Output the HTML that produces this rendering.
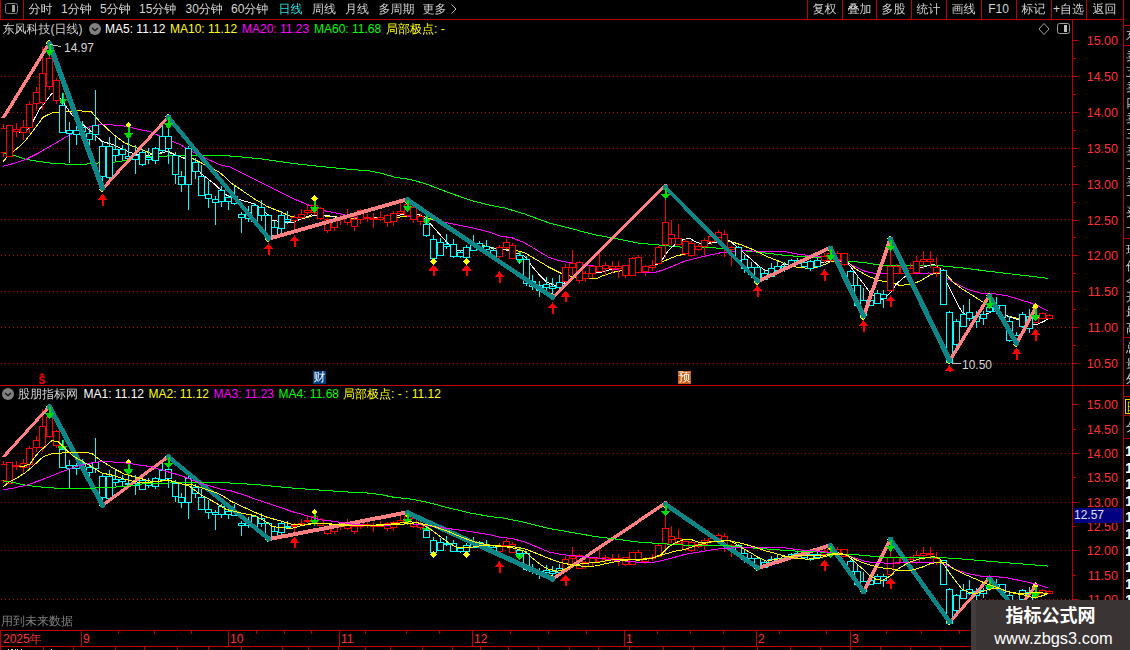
<!DOCTYPE html><html><head><meta charset="utf-8"><title>chart</title><style>
html,body{margin:0;padding:0;background:#000}
body{width:1130px;height:650px;position:relative;overflow:hidden;font-family:"Liberation Sans","WenQuanYi Zen Hei","Noto Sans CJK SC",sans-serif;font-size:12px;line-height:14px;color:#d4d4d4}
.t{position:absolute;white-space:nowrap}
.ax{position:absolute;left:1078px;width:40px;text-align:right;color:#ff3030;font-size:12.5px;line-height:12px;height:12px}
.w{color:#fff}.y{color:#ffff00}.m{color:#ff00ff}.g{color:#00ff00}.r{color:#ff3030}.c{color:#20e8e8}
.btn{position:absolute;top:2px;width:35px;text-align:center}
</style></head><body>
<svg width="1130" height="650" viewBox="0 0 1130 650" style="position:absolute;left:0;top:0" shape-rendering="crispEdges">
<defs><clipPath id="cm"><rect x="1" y="20" width="1071" height="352"/></clipPath><clipPath id="cs"><rect x="1" y="401" width="1071" height="229"/></clipPath></defs>
<path d="M1 76.5H1072M1 112.5H1072M1 148.5H1072M1 184.5H1072M1 219.5H1072M1 255.5H1072M1 291.5H1072M1 327.5H1072M1 363.5H1072M1 453.5H1072M1 502.5H1072M1 550.5H1072M1 599.5H1072" stroke="#c00000" stroke-dasharray="1 3" fill="none"/>
<g clip-path="url(#cm)">
<polyline points="3.2,152.8 13,155 25.9,159.3 38.8,161.5 51.7,163.2 64.7,164 80,164.7 98,163 115,162 130,160 146,156.7 170,155.9 201.6,155.8 230,156 245,157.3 262,159 291.6,163.3 320,166.4 352,169.6 369.3,170.8 381.6,173.3 393.9,177 410,179.5 424.8,183.4 447,192 471.6,200.6 491.3,205.6 505,208 524.6,214 549.3,223 573.9,229.3 595,234.8 614.6,238.3 639.3,243.2 664,245.5 685,247.5 704.6,247.6 729.3,248.5 741,250.5 755.8,252 774.2,254 786.5,255.5 798.8,256.5 819.3,257.5 844,261.4 862.7,262.2 876.5,264.7 887.6,265.6 904.3,265.6 929,265.6 940,265.7 962.3,267.9 984.6,270.8 1007,273.5 1029.2,276 1048.2,278.4" stroke="#00ff00" stroke-width="1" fill="none"/>
<polyline points="3.2,166.2 13,163.6 25.9,159.3 38.8,152.8 51.7,145.3 64.7,137.8 70,135 83,128.5 102,124 124,126 140,129.6 150,131.7 164.6,138.2 179.4,144.3 201.6,156.7 221.3,165.3 230,167 244.8,174.3 262,183 279.3,191.6 294,199 304,203 320,210 334.8,212.7 357,217.6 381.6,218.8 410,216 422.3,217.9 447,222.8 471.6,227.7 491.3,232.7 500,236 512.3,237.9 524.6,242.8 537,250.2 549.3,257.6 561.6,261.3 573.9,263.3 586.2,265 600,266.7 614.6,269.6 639.3,272.8 654,272.8 664,269.6 676.2,264.7 685,261 704.6,256.2 721.9,252.5 741.6,250.8 766.2,251.3 784.8,251.6 799.6,254.5 819.3,256.5 844,261.4 847.5,262.9 855.8,267 862.7,270.5 869.6,272.5 876.5,273.5 887.6,274 904.3,273.7 929,273 941.2,273.7 945.6,276.8 953.4,282.4 966.8,289 980,293 995.8,294 1007,295.8 1018,299 1029.2,302.5 1038,305.8 1048.2,311" stroke="#ff00ff" stroke-width="1" fill="none"/>
<polyline points="3.2,161.5 8.6,155 17.2,148.5 25.9,140 34.5,129 43,117.3 51.7,113 64.7,111.5 80,110.8 91.5,112 100,122 113,134 124,142.5 134.6,147 150,153 159,154 168,151.2 174,154 183,157.9 192,158.3 200.8,162.7 218.5,171.6 227,178.7 230,182.2 239.9,189 254.6,199 267,206.4 279.3,211.3 291.6,216.7 304,218.2 316,215 330,216.5 357,218.5 381.6,218 400,217 417,214.5 427,217.5 434.6,220.3 447,226.5 460,235 475,243 493.7,248.7 500,249.5 514.8,250.2 524.6,252.7 537,260 549.3,267.4 561.6,273.6 573.9,277.3 586.2,279 598,278 602.3,275.8 614.6,272 627,269.6 639.3,268.4 651.6,267 664,261 676.2,256 685,254 694.8,248.8 709.6,242.7 729.3,241 741.6,245 754,250 766.2,256.2 780,261.6 782.3,262.7 794.6,266.8 807,268.3 819.3,266.8 831.6,261.4 844,261.4 847.5,262.2 855.8,269 862.7,273.2 869.6,276.7 876.5,279.5 883.5,281.3 890.4,282.2 899.3,285.3 911.7,284.5 921.5,280.3 931.4,274.2 941.2,273 945.6,273.5 953.4,282.4 962.3,289 971.2,294.6 980,300.2 986.8,304.7 995.8,309 1007,315.8 1016,318 1029.2,318 1038,317 1048,319" stroke="#ffff00" stroke-width="1" fill="none"/>
<polyline points="19.4,132.4 23.7,131.3 30,128 34.5,118.4 39.9,108.7 45.3,102.2 51.7,93.6 58,95 65,105 72,115 78.6,121 91.5,131.7 102,141.4 113,144.6 124,150 134.6,154 145,156 159.7,153 167,151.7 177,155.4 189,160.3 201.6,174 214,183.7 226,194.8 240,199.8 254.6,204 264.5,211.3 272,220 279.3,221.6 291.6,223 301.4,218.7 311.3,215 330,216 345,219 360,219 380,217.5 395,216 410,213 420,215 431,224.5 447,242.5 456.8,251 471.6,250.6 484,247.4 500,248.5 512.3,251.4 524.6,256.4 532,266.2 539.4,274.8 546.8,282.2 556.7,286 564,283.4 571.4,278.5 581.3,274.8 600,272.4 614.6,268.4 639.3,269.6 651.6,267 661.4,261 668.8,250 676.2,243.7 683.6,239.3 690,238.5 697,242.7 704.6,244 729.3,240.2 739,248.8 749,257.4 758.8,266 766.2,271 780,267.3 782.3,265 799.6,262.7 819.3,263.4 829,261.4 839,259 847.5,262.9 853,269.8 858.5,277.4 864,284.3 869.6,292 876,298 882,299.5 886.2,296.8 891.8,291.2 896,284.3 901.5,279.5 909.2,273 919,268 933.8,264.3 940,268 945.6,280 951,291.3 957.8,304.7 962.3,312.5 969,317 975.7,319 984.6,314.7 993.5,311 1000,311.4 1007,315.8 1016,319 1022.5,320.3 1029.2,323.6 1036,324.8 1042.6,322 1048.2,319" stroke="#ffffff" stroke-width="1" fill="none"/>
<path d="M61.5 93h2v6h4l-5 6l-5-6h4z" fill="#00dc00"/>
<path d="M425.5 213h2v6h4l-5 6l-5-6h4z" fill="#00dc00"/>
<path d="M518.5 252h2v6h4l-5 6l-5-6h4z" fill="#00dc00"/>
<path d="M3.5 124V128M3.5 152V157M0.5 128.5H6.5V152.5H0.5ZM6.5 125.5H12.5V156.5H6.5ZM16.5 123V129M16.5 131V137M13.5 129.5H19.5V131.5H13.5ZM23.5 120V127M23.5 132V140M20.5 127.5H26.5V132.5H20.5ZM29.5 101V104M29.5 127V133M26.5 104.5H32.5V127.5H26.5ZM36.5 87V92M36.5 103V111M33.5 92.5H39.5V103.5H33.5ZM42.5 47V73M42.5 102V110M39.5 73.5H45.5V102.5H39.5ZM49.5 43V58M49.5 86V90M46.5 58.5H52.5V86.5H46.5ZM56.5 78V80M56.5 100V104M53.5 80.5H59.5V100.5H53.5ZM294.5 215V217M294.5 220V230M291.5 217.5H297.5V220.5H291.5ZM301.5 209V214M301.5 217V220M298.5 214.5H304.5V217.5H298.5ZM307.5 204V210M307.5 212V215M304.5 210.5H310.5V212.5H304.5ZM314.5 201V205M314.5 212V215M311.5 205.5H317.5V212.5H311.5ZM320.5 207V208M320.5 218V220M317.5 208.5H323.5V218.5H317.5ZM327.5 218V219M327.5 230V233M324.5 219.5H330.5V230.5H324.5ZM334.5 218V220M334.5 227V231M331.5 220.5H337.5V227.5H331.5ZM340.5 215V218M340.5 219V225M337.5 218.5H343.5V219.5H337.5ZM347.5 209V216M347.5 222V225M344.5 216.5H350.5V222.5H344.5ZM354.5 216V219M354.5 226V231M351.5 219.5H357.5V226.5H351.5ZM360.5 209V210M360.5 219V224M357.5 210.5H363.5V219.5H357.5ZM367.5 214V217M367.5 218V222M364.5 217.5H370.5V218.5H364.5ZM373.5 213V218M373.5 219V228M370.5 218.5H376.5V219.5H370.5ZM380.5 211V217M380.5 219V221M377.5 217.5H383.5V219.5H377.5ZM387.5 214V215M387.5 222V227M384.5 215.5H390.5V222.5H384.5ZM393.5 211V213M393.5 221V226M390.5 213.5H396.5V221.5H390.5ZM400.5 202V211M400.5 213V214M397.5 211.5H403.5V213.5H397.5ZM407.5 199V204M407.5 215V217M404.5 204.5H410.5V215.5H404.5ZM413.5 204V207M413.5 219V223M410.5 207.5H416.5V219.5H410.5ZM420.5 213V216M420.5 221V225M417.5 216.5H423.5V221.5H417.5ZM499.5 245V247M499.5 256V258M496.5 247.5H502.5V256.5H496.5ZM506.5 239V242M506.5 247V249M503.5 242.5H509.5V247.5H503.5ZM512.5 243V245M512.5 258V259M509.5 245.5H515.5V258.5H509.5ZM565.5 264V267M565.5 281V283M562.5 267.5H568.5V281.5H562.5ZM572.5 250V263M572.5 267V275M569.5 263.5H575.5V267.5H569.5ZM579.5 261V262M579.5 280V283M576.5 262.5H582.5V280.5H576.5ZM585.5 271V273M585.5 278V282M582.5 273.5H588.5V278.5H582.5ZM592.5 273V278M589.5 266.5H595.5V273.5H589.5ZM599.5 252V266M599.5 271V272M596.5 266.5H602.5V271.5H596.5ZM605.5 262V265M605.5 268V276M602.5 265.5H608.5V268.5H602.5ZM612.5 261V266M612.5 268V273M609.5 266.5H615.5V268.5H609.5ZM618.5 261V266M618.5 268V278M615.5 266.5H621.5V268.5H615.5ZM625.5 275V278M622.5 265.5H628.5V275.5H622.5ZM632.5 257V258M632.5 275V276M629.5 258.5H635.5V275.5H629.5ZM638.5 255V257M638.5 272V273M635.5 257.5H641.5V272.5H635.5ZM645.5 265V266M645.5 271V276M642.5 266.5H648.5V271.5H642.5ZM652.5 260V265M652.5 267V271M649.5 265.5H655.5V267.5H649.5ZM658.5 246V247M655.5 247.5H661.5V263.5H655.5ZM665.5 185V222M665.5 244V258M662.5 222.5H668.5V244.5H662.5ZM671.5 220V234M671.5 238V245M668.5 234.5H674.5V238.5H668.5ZM678.5 224V238M678.5 244V245M675.5 238.5H681.5V244.5H675.5ZM685.5 239V241M685.5 253V255M682.5 241.5H688.5V253.5H682.5ZM691.5 241V243M691.5 255V257M688.5 243.5H694.5V255.5H688.5ZM698.5 244V246M698.5 249V251M695.5 246.5H701.5V249.5H695.5ZM704.5 238V240M704.5 246V255M701.5 240.5H707.5V246.5H701.5ZM711.5 234V236M711.5 241V245M708.5 236.5H714.5V241.5H708.5ZM718.5 230V232M718.5 237V239M715.5 232.5H721.5V237.5H715.5ZM724.5 230V234M724.5 246V257M721.5 234.5H727.5V246.5H721.5ZM731.5 246V247M731.5 249V266M728.5 247.5H734.5V249.5H728.5ZM824.5 253V256M824.5 260V263M821.5 256.5H827.5V260.5H821.5ZM830.5 246V253M830.5 260V262M827.5 253.5H833.5V260.5H827.5ZM837.5 251V253M837.5 259V261M834.5 253.5H840.5V259.5H834.5ZM844.5 264V266M841.5 253.5H847.5V264.5H841.5ZM890.5 236V266M887.5 266.5H893.5V290.5H887.5ZM896.5 264V266M896.5 273V274M893.5 266.5H899.5V273.5H893.5ZM903.5 264V266M903.5 273V274M900.5 266.5H906.5V273.5H900.5ZM910.5 263V268M910.5 273V274M907.5 268.5H913.5V273.5H907.5ZM916.5 256V261M916.5 272V275M913.5 261.5H919.5V272.5H913.5ZM923.5 251V259M923.5 261V269M920.5 259.5H926.5V261.5H920.5ZM930.5 251V259M930.5 261V268M927.5 259.5H933.5V261.5H927.5ZM936.5 257V267M936.5 272V277M933.5 267.5H939.5V272.5H933.5ZM1035.5 306V318M1035.5 322V323M1032.5 318.5H1038.5V322.5H1032.5ZM1042.5 312V313M1042.5 318V319M1039.5 313.5H1045.5V318.5H1039.5ZM1049.5 314V315M1049.5 318V319M1046.5 315.5H1052.5V318.5H1046.5Z" stroke="#ff0000" fill="#000"/>
<path d="M62.5 93V105M59.5 105.5H65.5V132.5H59.5ZM69.5 122V130M69.5 133V163M66.5 130.5H72.5V133.5H66.5ZM76.5 126V130M76.5 134V145M73.5 130.5H79.5V134.5H73.5ZM82.5 121V127M82.5 131V137M79.5 127.5H85.5V131.5H79.5ZM89.5 128V133M89.5 139V147M86.5 133.5H92.5V139.5H86.5ZM95.5 90V125M95.5 134V141M92.5 125.5H98.5V134.5H92.5ZM102.5 142V146M102.5 176V190M99.5 146.5H105.5V176.5H99.5ZM109.5 137V146M109.5 177V180M106.5 146.5H112.5V177.5H106.5ZM115.5 137V149M115.5 155V161M112.5 149.5H118.5V155.5H112.5ZM122.5 145V149M122.5 154V160M119.5 149.5H125.5V154.5H119.5ZM128.5 139V156M128.5 158V160M125.5 156.5H131.5V158.5H125.5ZM135.5 145V155M135.5 159V174M132.5 155.5H138.5V159.5H132.5ZM142.5 149V152M142.5 164V166M139.5 152.5H145.5V164.5H139.5ZM148.5 148V157M148.5 159V164M145.5 157.5H151.5V159.5H145.5ZM155.5 147V148M155.5 160V164M152.5 148.5H158.5V160.5H152.5ZM162.5 125V136M162.5 150V153M159.5 136.5H165.5V150.5H159.5ZM168.5 128V136M168.5 148V164M165.5 136.5H171.5V148.5H165.5ZM175.5 152V155M175.5 174V184M172.5 155.5H178.5V174.5H172.5ZM181.5 171V176M181.5 184V192M178.5 176.5H184.5V184.5H178.5ZM188.5 146V148M188.5 184V210M185.5 148.5H191.5V184.5H185.5ZM195.5 158V162M195.5 171V179M192.5 162.5H198.5V171.5H192.5ZM201.5 165V176M198.5 176.5H204.5V195.5H198.5ZM208.5 181V194M208.5 198V208M205.5 194.5H211.5V198.5H205.5ZM215.5 196V199M215.5 202V225M212.5 199.5H218.5V202.5H212.5ZM221.5 186V190M221.5 201V207M218.5 190.5H224.5V201.5H218.5ZM228.5 195V197M228.5 201V210M225.5 197.5H231.5V201.5H225.5ZM234.5 186V196M234.5 203V205M231.5 196.5H237.5V203.5H231.5ZM241.5 212V214M241.5 217V233M238.5 214.5H244.5V217.5H238.5ZM248.5 206V212M248.5 218V222M245.5 212.5H251.5V218.5H245.5ZM254.5 203V205M254.5 221V224M251.5 205.5H257.5V221.5H251.5ZM261.5 200V207M261.5 215V221M258.5 207.5H264.5V215.5H258.5ZM268.5 214V215M268.5 238V242M265.5 215.5H271.5V238.5H265.5ZM274.5 221V227M274.5 235V236M271.5 227.5H277.5V235.5H271.5ZM281.5 211V215M281.5 228V233M278.5 215.5H284.5V228.5H278.5ZM287.5 211V219M287.5 221V224M284.5 219.5H290.5V221.5H284.5ZM426.5 217V224M426.5 235V237M423.5 224.5H429.5V235.5H423.5ZM433.5 235V239M430.5 239.5H436.5V258.5H430.5ZM440.5 238V242M440.5 255V256M437.5 242.5H443.5V255.5H437.5ZM446.5 234V244M446.5 246V249M443.5 244.5H449.5V246.5H443.5ZM453.5 239V244M453.5 256V258M450.5 244.5H456.5V256.5H450.5ZM460.5 250V252M460.5 256V258M457.5 252.5H463.5V256.5H457.5ZM466.5 245V247M466.5 257V258M463.5 247.5H469.5V257.5H463.5ZM473.5 235V243M473.5 250V251M470.5 243.5H476.5V250.5H470.5ZM479.5 241V243M479.5 247V250M476.5 243.5H482.5V247.5H476.5ZM486.5 240V246M486.5 249V251M483.5 246.5H489.5V249.5H483.5ZM493.5 247V250M493.5 257V258M490.5 250.5H496.5V257.5H490.5ZM519.5 253V255M519.5 259V264M516.5 255.5H522.5V259.5H516.5ZM526.5 256V259M526.5 283V286M523.5 259.5H529.5V283.5H523.5ZM532.5 275V281M532.5 286V290M529.5 281.5H535.5V286.5H529.5ZM539.5 281V285M539.5 290V297M536.5 285.5H542.5V290.5H536.5ZM546.5 277V284M546.5 287V291M543.5 284.5H549.5V287.5H543.5ZM552.5 278V286M552.5 288V298M549.5 286.5H555.5V288.5H549.5ZM559.5 275V282M559.5 287V290M556.5 282.5H562.5V287.5H556.5ZM738.5 246V247M738.5 260V261M735.5 247.5H741.5V260.5H735.5ZM744.5 255V259M744.5 268V273M741.5 259.5H747.5V268.5H741.5ZM751.5 262V267M751.5 274V278M748.5 267.5H754.5V274.5H748.5ZM757.5 265V267M757.5 281V283M754.5 267.5H760.5V281.5H754.5ZM764.5 270V273M764.5 279V280M761.5 273.5H767.5V279.5H761.5ZM771.5 263V268M768.5 268.5H774.5V276.5H768.5ZM777.5 261V266M777.5 270V272M774.5 266.5H780.5V270.5H774.5ZM784.5 262V266M784.5 268V272M781.5 266.5H787.5V268.5H781.5ZM791.5 259V260M791.5 265V266M788.5 260.5H794.5V265.5H788.5ZM797.5 258V260M797.5 263V264M794.5 260.5H800.5V263.5H794.5ZM804.5 259V262M804.5 266V267M801.5 262.5H807.5V266.5H801.5ZM810.5 260V261M810.5 268V271M807.5 261.5H813.5V268.5H807.5ZM817.5 258V260M817.5 266V268M814.5 260.5H820.5V266.5H814.5ZM850.5 270V271M850.5 285V286M847.5 271.5H853.5V285.5H847.5ZM857.5 276V285M857.5 305V306M854.5 285.5H860.5V305.5H854.5ZM863.5 288V300M863.5 315V318M860.5 300.5H866.5V315.5H860.5ZM870.5 297V300M870.5 305V306M867.5 300.5H873.5V305.5H867.5ZM877.5 290V293M877.5 303V304M874.5 293.5H880.5V303.5H874.5ZM883.5 290V294M883.5 298V308M880.5 294.5H886.5V298.5H880.5ZM943.5 269V270M943.5 304V305M940.5 270.5H946.5V304.5H940.5ZM949.5 311V312M949.5 362V363M946.5 312.5H952.5V362.5H946.5ZM956.5 319V321M956.5 344V353M953.5 321.5H959.5V344.5H953.5ZM963.5 305V314M963.5 326V327M960.5 314.5H966.5V326.5H960.5ZM969.5 299V312M969.5 318V321M966.5 312.5H972.5V318.5H966.5ZM976.5 311V316M976.5 321V328M973.5 316.5H979.5V321.5H973.5ZM983.5 311V314M983.5 318V325M980.5 314.5H986.5V318.5H980.5ZM989.5 294V307M989.5 311V313M986.5 307.5H992.5V311.5H986.5ZM996.5 297V305M996.5 311V314M993.5 305.5H999.5V311.5H993.5ZM1002.5 317V318M999.5 305.5H1005.5V317.5H999.5ZM1009.5 316V321M1009.5 340V342M1006.5 321.5H1012.5V340.5H1006.5ZM1016.5 332V335M1016.5 340V346M1013.5 335.5H1019.5V340.5H1013.5ZM1022.5 312V314M1022.5 326V328M1019.5 314.5H1025.5V326.5H1019.5ZM1029.5 309V316M1029.5 328V333M1026.5 316.5H1032.5V328.5H1026.5Z" stroke="#00ffff" fill="#000"/>
<path d="M49 39.8l3.2 3.2l-3.2 3.2l-3.2-3.2z" fill="#ffff00"/>
<path d="M102 186.3l3.2 3.2l-3.2 3.2l-3.2-3.2z" fill="#ffff00"/>
<path d="M168 113.6l3.2 3.2l-3.2 3.2l-3.2-3.2z" fill="#ffff00"/>
<path d="M268 236.1l3.2 3.2l-3.2 3.2l-3.2-3.2z" fill="#ffff00"/>
<path d="M407 197.9l3.2 3.2l-3.2 3.2l-3.2-3.2z" fill="#ffff00"/>
<path d="M552 292.5l3.2 3.2l-3.2 3.2l-3.2-3.2z" fill="#ffff00"/>
<path d="M665 184.3l3.2 3.2l-3.2 3.2l-3.2-3.2z" fill="#ffff00"/>
<path d="M757 278.8l3.2 3.2l-3.2 3.2l-3.2-3.2z" fill="#ffff00"/>
<path d="M830 246.3l3.2 3.2l-3.2 3.2l-3.2-3.2z" fill="#ffff00"/>
<path d="M863 313.8l3.2 3.2l-3.2 3.2l-3.2-3.2z" fill="#ffff00"/>
<path d="M890 235.3l3.2 3.2l-3.2 3.2l-3.2-3.2z" fill="#ffff00"/>
<path d="M949 358.3l3.2 3.2l-3.2 3.2l-3.2-3.2z" fill="#ffff00"/>
<path d="M989 292.3l3.2 3.2l-3.2 3.2l-3.2-3.2z" fill="#ffff00"/>
<path d="M1016 341.3l3.2 3.2l-3.2 3.2l-3.2-3.2z" fill="#ffff00"/>
<path d="M1035 304.6l3.2 3.2l-3.2 3.2l-3.2-3.2z" fill="#ffff00"/>
<polygon points="1.5,117.5 47.5,43 51.5,43 5.5,117.5" fill="#ff8080"/>
<circle cx="49.5" cy="43" r="2" fill="#ff8080"/>
<polygon points="100.5,189 166.5,116.8 170.5,116.8 104.5,189" fill="#ff8080"/>
<circle cx="102.5" cy="189" r="2" fill="#ff8080"/>
<circle cx="168.5" cy="116.8" r="2" fill="#ff8080"/>
<polygon points="268.5,236.8 407.5,197.1 407.5,201.1 268.5,240.8" fill="#ff8080"/>
<circle cx="268.5" cy="238.8" r="2" fill="#ff8080"/>
<circle cx="407.5" cy="199.1" r="2" fill="#ff8080"/>
<polygon points="552.5,295.5 665.5,183.5 665.5,187.5 552.5,299.5" fill="#ff8080"/>
<circle cx="552.5" cy="297.5" r="2" fill="#ff8080"/>
<circle cx="665.5" cy="185.5" r="2" fill="#ff8080"/>
<polygon points="757.5,279.5 830.5,245.5 830.5,249.5 757.5,283.5" fill="#ff8080"/>
<circle cx="757.5" cy="281.5" r="2" fill="#ff8080"/>
<circle cx="830.5" cy="247.5" r="2" fill="#ff8080"/>
<polygon points="861.5,316.5 888.5,238.5 892.5,238.5 865.5,316.5" fill="#ff8080"/>
<circle cx="863.5" cy="316.5" r="2" fill="#ff8080"/>
<circle cx="890.5" cy="238.5" r="2" fill="#ff8080"/>
<polygon points="947.5,361 987.5,295.5 991.5,295.5 951.5,361" fill="#ff8080"/>
<circle cx="949.5" cy="361" r="2" fill="#ff8080"/>
<circle cx="989.5" cy="295.5" r="2" fill="#ff8080"/>
<polygon points="1014.5,344 1033.5,307.8 1037.5,307.8 1018.5,344" fill="#ff8080"/>
<circle cx="1016.5" cy="344" r="2" fill="#ff8080"/>
<circle cx="1035.5" cy="307.8" r="2" fill="#ff8080"/>
<polygon points="46.7,43.8 99.7,188.2 105.3,188.2 52.3,43.8" fill="#0c8686"/>
<circle cx="49.5" cy="43.8" r="2.8" fill="#0c8686"/>
<circle cx="102.5" cy="188.2" r="2.8" fill="#0c8686"/>
<polygon points="165.7,117.6 265.7,238 271.3,238 171.3,117.6" fill="#0c8686"/>
<circle cx="168.5" cy="117.6" r="2.8" fill="#0c8686"/>
<circle cx="268.5" cy="238" r="2.8" fill="#0c8686"/>
<polygon points="407.5,197.1 552.5,294.4 552.5,300 407.5,202.7" fill="#0c8686"/>
<circle cx="407.5" cy="199.9" r="2.8" fill="#0c8686"/>
<circle cx="552.5" cy="297.2" r="2.8" fill="#0c8686"/>
<polygon points="662.7,187.4 754.7,280.7 760.3,280.7 668.3,187.4" fill="#0c8686"/>
<circle cx="665.5" cy="187.4" r="2.8" fill="#0c8686"/>
<circle cx="757.5" cy="280.7" r="2.8" fill="#0c8686"/>
<polygon points="827.7,248.3 860.7,315.7 866.3,315.7 833.3,248.3" fill="#0c8686"/>
<circle cx="830.5" cy="248.3" r="2.8" fill="#0c8686"/>
<circle cx="863.5" cy="315.7" r="2.8" fill="#0c8686"/>
<polygon points="887.7,239.3 946.7,360.2 952.3,360.2 893.3,239.3" fill="#0c8686"/>
<circle cx="890.5" cy="239.3" r="2.8" fill="#0c8686"/>
<circle cx="949.5" cy="360.2" r="2.8" fill="#0c8686"/>
<polygon points="986.7,296.3 1013.7,343.2 1019.3,343.2 992.3,296.3" fill="#0c8686"/>
<circle cx="989.5" cy="296.3" r="2.8" fill="#0c8686"/>
<circle cx="1016.5" cy="343.2" r="2.8" fill="#0c8686"/>
<path d="M48.5 44h2v6h4l-5 6l-5-6h4z" fill="#00dc00"/>
<path d="M128.5 121.6l3.2 3.2l-3.2 3.2l-3.2-3.2z" fill="#ffff00"/>
<path d="M127.5 127h2v6h4l-5 6l-5-6h4z" fill="#00dc00"/>
<path d="M167.5 117h2v6h4l-5 6l-5-6h4z" fill="#00dc00"/>
<path d="M314.5 195.3l3.2 3.2l-3.2 3.2l-3.2-3.2z" fill="#ffff00"/>
<path d="M313.5 201h2v6h4l-5 6l-5-6h4z" fill="#00dc00"/>
<path d="M406.5 200h2v6h4l-5 6l-5-6h4z" fill="#00dc00"/>
<path d="M664.5 187.6h2v6h4l-5 6l-5-6h4z" fill="#00dc00"/>
<path d="M829.5 249h2v6h4l-5 6l-5-6h4z" fill="#00dc00"/>
<path d="M889.5 239.7h2v6h4l-5 6l-5-6h4z" fill="#00dc00"/>
<path d="M988.5 297h2v6h4l-5 6l-5-6h4z" fill="#00dc00"/>
<path d="M1035.5 303l3.2 3.2l-3.2 3.2l-3.2-3.2z" fill="#ffff00"/>
<path d="M1034.5 309h2v6h4l-5 6l-5-6h4z" fill="#00dc00"/>
<path d="M102.5 194l5 6h-4v5.5h-2v-5.5h-4z" fill="#ff0000"/>
<path d="M268.5 243.4l5 6h-4v5.5h-2v-5.5h-4z" fill="#ff0000"/>
<path d="M294.5 235.4l5 6h-4v5.5h-2v-5.5h-4z" fill="#ff0000"/>
<path d="M433.5 258.3l3.2 3.2l-3.2 3.2l-3.2-3.2z" fill="#ffff00"/>
<path d="M433.5 264.7l5 6h-4v5.5h-2v-5.5h-4z" fill="#ff0000"/>
<path d="M466.5 258.3l3.2 3.2l-3.2 3.2l-3.2-3.2z" fill="#ffff00"/>
<path d="M466.5 264.7l5 6h-4v5.5h-2v-5.5h-4z" fill="#ff0000"/>
<path d="M499.5 271.3l5 6h-4v5.5h-2v-5.5h-4z" fill="#ff0000"/>
<path d="M552.5 302.4l5 6h-4v5.5h-2v-5.5h-4z" fill="#ff0000"/>
<path d="M565.5 290.8l5 6h-4v5.5h-2v-5.5h-4z" fill="#ff0000"/>
<path d="M757.5 285.3l5 6h-4v5.5h-2v-5.5h-4z" fill="#ff0000"/>
<path d="M824.5 269.3l5 6h-4v5.5h-2v-5.5h-4z" fill="#ff0000"/>
<path d="M863.5 320.3l5 6h-4v5.5h-2v-5.5h-4z" fill="#ff0000"/>
<path d="M890.5 295.4l5 6h-4v5.5h-2v-5.5h-4z" fill="#ff0000"/>
<path d="M949.5 365.3l5 6h-4v5.5h-2v-5.5h-4z" fill="#ff0000"/>
<path d="M1016.5 348l5 6h-4v5.5h-2v-5.5h-4z" fill="#ff0000"/>
<path d="M1035.5 329l5 6h-4v5.5h-2v-5.5h-4z" fill="#ff0000"/>
</g>
<g clip-path="url(#cs)">
<path d="M61.5 440.3h2v6h4l-5 6l-5-6h4z" fill="#00dc00"/>
<path d="M425.5 521.7h2v6h4l-5 6l-5-6h4z" fill="#00dc00"/>
<path d="M518.5 548.2h2v6h4l-5 6l-5-6h4z" fill="#00dc00"/>
<path d="M3.5 461V464M3.5 480V483M0.5 464.5H6.5V480.5H0.5ZM6.5 462.5H12.5V483.5H6.5ZM16.5 461V465M16.5 466V470M13.5 465.5H19.5V466.5H13.5ZM23.5 459V463M23.5 467V473M20.5 463.5H26.5V467.5H20.5ZM29.5 446V448M29.5 464V468M26.5 448.5H32.5V464.5H26.5ZM36.5 436V440M36.5 447V452M33.5 440.5H39.5V447.5H33.5ZM42.5 409V426M42.5 447V452M39.5 426.5H45.5V447.5H39.5ZM49.5 406V417M49.5 436V438M46.5 417.5H52.5V436.5H46.5ZM56.5 430V431M56.5 445V448M53.5 431.5H59.5V445.5H53.5ZM294.5 523V525M294.5 526V533M291.5 525.5H297.5V526.5H291.5ZM301.5 519V523M301.5 524V526M298.5 523.5H304.5V524.5H298.5ZM307.5 516V520M307.5 521V523M304.5 520.5H310.5V521.5H304.5ZM314.5 514V516M314.5 521V523M311.5 516.5H317.5V521.5H311.5ZM320.5 518V519M320.5 525V526M317.5 519.5H323.5V525.5H317.5ZM327.5 525V526M327.5 533V535M324.5 526.5H330.5V533.5H324.5ZM334.5 525V526M334.5 531V534M331.5 526.5H337.5V531.5H331.5ZM340.5 523V525M340.5 526V530M337.5 525.5H343.5V526.5H337.5ZM347.5 519V524M347.5 528V530M344.5 524.5H350.5V528.5H344.5ZM354.5 524V526M354.5 531V534M351.5 526.5H357.5V531.5H351.5ZM360.5 519V520M360.5 526V529M357.5 520.5H363.5V526.5H357.5ZM367.5 522V524M367.5 525V528M364.5 524.5H370.5V525.5H364.5ZM373.5 522V525M373.5 526V532M370.5 525.5H376.5V526.5H370.5ZM380.5 521V524M380.5 526V527M377.5 524.5H383.5V526.5H377.5ZM387.5 522V523M387.5 528V531M384.5 523.5H390.5V528.5H384.5ZM393.5 521V522M393.5 527V531M390.5 522.5H396.5V527.5H390.5ZM400.5 514V520M397.5 520.5H403.5V522.5H397.5ZM407.5 512V516M407.5 523V524M404.5 516.5H410.5V523.5H404.5ZM413.5 516V518M413.5 526V528M410.5 518.5H416.5V526.5H410.5ZM420.5 522V524M420.5 527V530M417.5 524.5H423.5V527.5H417.5ZM499.5 543V545M499.5 551V553M496.5 545.5H502.5V551.5H496.5ZM506.5 539V541M506.5 545V546M503.5 541.5H509.5V545.5H503.5ZM512.5 542V544M512.5 552V553M509.5 544.5H515.5V552.5H509.5ZM565.5 556V559M565.5 568V569M562.5 559.5H568.5V568.5H562.5ZM572.5 547V556M572.5 558V564M569.5 556.5H575.5V558.5H569.5ZM579.5 554V555M579.5 568V569M576.5 555.5H582.5V568.5H576.5ZM585.5 561V562M585.5 566V569M582.5 562.5H588.5V566.5H582.5ZM592.5 562V566M589.5 558.5H595.5V562.5H589.5ZM599.5 548V558M599.5 561V562M596.5 558.5H602.5V561.5H596.5ZM605.5 555V557M605.5 559V564M602.5 557.5H608.5V559.5H602.5ZM612.5 554V558M612.5 559V563M609.5 558.5H615.5V559.5H609.5ZM618.5 554V558M618.5 559V566M615.5 558.5H621.5V559.5H615.5ZM625.5 564V566M622.5 557.5H628.5V564.5H622.5ZM629.5 552.5H635.5V564.5H629.5ZM638.5 550V552M635.5 552.5H641.5V562.5H635.5ZM645.5 557V558M645.5 561V564M642.5 558.5H648.5V561.5H642.5ZM652.5 554V557M652.5 558V561M649.5 557.5H655.5V558.5H649.5ZM658.5 544V545M655.5 545.5H661.5V556.5H655.5ZM665.5 502V528M665.5 543V553M662.5 528.5H668.5V543.5H662.5ZM671.5 526V536M671.5 539V543M668.5 536.5H674.5V539.5H668.5ZM678.5 529V538M675.5 538.5H681.5V543.5H675.5ZM685.5 539V541M685.5 549V550M682.5 541.5H688.5V549.5H682.5ZM691.5 541V542M691.5 550V552M688.5 542.5H694.5V550.5H688.5ZM698.5 543V544M698.5 546V548M695.5 544.5H701.5V546.5H695.5ZM704.5 538V540M704.5 544V550M701.5 540.5H707.5V544.5H701.5ZM711.5 536V538M711.5 541V543M708.5 538.5H714.5V541.5H708.5ZM718.5 533V535M718.5 538V539M715.5 535.5H721.5V538.5H715.5ZM724.5 533V536M724.5 544V552M721.5 536.5H727.5V544.5H721.5ZM731.5 544V545M731.5 546V557M728.5 545.5H734.5V546.5H728.5ZM824.5 549V551M824.5 554V556M821.5 551.5H827.5V554.5H821.5ZM830.5 544V549M830.5 554V555M827.5 549.5H833.5V554.5H827.5ZM837.5 547V549M837.5 553V554M834.5 549.5H840.5V553.5H834.5ZM844.5 556V557M841.5 549.5H847.5V556.5H841.5ZM890.5 538V557M887.5 557.5H893.5V574.5H887.5ZM896.5 556V557M893.5 557.5H899.5V563.5H893.5ZM903.5 556V558M903.5 562V563M900.5 558.5H906.5V562.5H900.5ZM910.5 556V559M910.5 562V563M907.5 559.5H913.5V562.5H907.5ZM916.5 551V555M916.5 562V564M913.5 555.5H919.5V562.5H913.5ZM923.5 547V553M923.5 555V560M920.5 553.5H926.5V555.5H920.5ZM930.5 547V553M930.5 554V559M927.5 553.5H933.5V554.5H927.5ZM936.5 552V558M936.5 562V565M933.5 558.5H939.5V562.5H933.5ZM1035.5 585V593M1032.5 593.5H1038.5V596.5H1032.5ZM1042.5 589V590M1042.5 593V594M1039.5 590.5H1045.5V593.5H1039.5ZM1049.5 590V591M1049.5 593V594M1046.5 591.5H1052.5V593.5H1046.5Z" stroke="#ff0000" fill="#000"/>
<path d="M62.5 440V449M59.5 449.5H65.5V467.5H59.5ZM69.5 460V465M69.5 468V488M66.5 465.5H72.5V468.5H66.5ZM76.5 463V465M76.5 468V475M73.5 465.5H79.5V468.5H73.5ZM82.5 459V463M82.5 466V470M79.5 463.5H85.5V466.5H79.5ZM89.5 464V467M89.5 472V477M86.5 467.5H92.5V472.5H86.5ZM95.5 438V462M95.5 468V473M92.5 462.5H98.5V468.5H92.5ZM102.5 474V476M102.5 497V506M99.5 476.5H105.5V497.5H99.5ZM109.5 470V476M109.5 498V499M106.5 476.5H112.5V498.5H106.5ZM115.5 470V479M115.5 482V486M112.5 479.5H118.5V482.5H112.5ZM122.5 475V479M122.5 481V486M119.5 479.5H125.5V481.5H119.5ZM128.5 471V483M128.5 484V486M125.5 483.5H131.5V484.5H125.5ZM135.5 475V483M135.5 485V495M132.5 483.5H138.5V485.5H132.5ZM142.5 478V480M142.5 489V490M139.5 480.5H145.5V489.5H139.5ZM148.5 478V483M148.5 485V488M145.5 483.5H151.5V485.5H145.5ZM155.5 477V478M155.5 486V489M152.5 478.5H158.5V486.5H152.5ZM162.5 462V470M162.5 479V481M159.5 470.5H165.5V479.5H159.5ZM168.5 464V469M168.5 478V488M165.5 469.5H171.5V478.5H165.5ZM175.5 480V483M175.5 496V502M172.5 483.5H178.5V496.5H172.5ZM181.5 493V497M181.5 502V508M178.5 497.5H184.5V502.5H178.5ZM188.5 476V478M188.5 502V519M185.5 478.5H191.5V502.5H185.5ZM195.5 484V487M195.5 493V498M192.5 487.5H198.5V493.5H192.5ZM201.5 489V497M198.5 497.5H204.5V509.5H198.5ZM208.5 500V509M208.5 512V519M205.5 509.5H211.5V512.5H205.5ZM215.5 510V512M215.5 514V530M212.5 512.5H218.5V514.5H212.5ZM221.5 504V506M221.5 514V518M218.5 506.5H224.5V514.5H218.5ZM228.5 509V511M228.5 514V519M225.5 511.5H231.5V514.5H225.5ZM234.5 504V511M234.5 515V516M231.5 511.5H237.5V515.5H231.5ZM241.5 521V523M241.5 525V536M238.5 523.5H244.5V525.5H238.5ZM248.5 517V521M248.5 525V528M245.5 521.5H251.5V525.5H245.5ZM254.5 515V516M254.5 527V529M251.5 516.5H257.5V527.5H251.5ZM261.5 513V518M261.5 523V527M258.5 518.5H264.5V523.5H258.5ZM268.5 522V523M268.5 539V541M265.5 523.5H271.5V539.5H265.5ZM274.5 527V531M274.5 536V537M271.5 531.5H277.5V536.5H271.5ZM281.5 521V523M281.5 532V536M278.5 523.5H284.5V532.5H278.5ZM287.5 521V526M287.5 527V529M284.5 526.5H290.5V527.5H284.5ZM426.5 524V530M426.5 537V538M423.5 530.5H429.5V537.5H423.5ZM433.5 537V540M433.5 552V553M430.5 540.5H436.5V552.5H430.5ZM440.5 538V542M440.5 550V551M437.5 542.5H443.5V550.5H437.5ZM446.5 536V543M446.5 544V546M443.5 543.5H449.5V544.5H443.5ZM453.5 540V543M453.5 551V552M450.5 543.5H456.5V551.5H450.5ZM460.5 547V548M460.5 551V553M457.5 548.5H463.5V551.5H457.5ZM466.5 543V545M466.5 551V553M463.5 545.5H469.5V551.5H463.5ZM473.5 537V542M470.5 542.5H476.5V547.5H470.5ZM479.5 541V542M479.5 545V547M476.5 542.5H482.5V545.5H476.5ZM486.5 540V544M486.5 546V547M483.5 544.5H489.5V546.5H483.5ZM493.5 545V547M493.5 551V552M490.5 547.5H496.5V551.5H490.5ZM519.5 549V550M519.5 553V556M516.5 550.5H522.5V553.5H516.5ZM526.5 551V553M526.5 569V571M523.5 553.5H529.5V569.5H523.5ZM532.5 564V568M532.5 571V574M529.5 568.5H535.5V571.5H529.5ZM539.5 568V571M539.5 574V579M536.5 571.5H542.5V574.5H536.5ZM546.5 565V570M546.5 572V575M543.5 570.5H549.5V572.5H543.5ZM552.5 566V571M552.5 573V579M549.5 571.5H555.5V573.5H549.5ZM559.5 564V568M559.5 572V574M556.5 568.5H562.5V572.5H556.5ZM738.5 544V545M735.5 545.5H741.5V554.5H735.5ZM744.5 550V553M744.5 559V563M741.5 553.5H747.5V559.5H741.5ZM751.5 555V558M751.5 563V566M748.5 558.5H754.5V563.5H748.5ZM757.5 557V558M757.5 568V569M754.5 558.5H760.5V568.5H754.5ZM764.5 560V562M761.5 562.5H767.5V567.5H761.5ZM771.5 556V559M771.5 564V565M768.5 559.5H774.5V564.5H768.5ZM777.5 554V558M777.5 560V561M774.5 558.5H780.5V560.5H774.5ZM784.5 555V558M784.5 559V562M781.5 558.5H787.5V559.5H781.5ZM791.5 553V554M788.5 554.5H794.5V557.5H788.5ZM797.5 552V553M794.5 553.5H800.5V556.5H794.5ZM804.5 553V555M804.5 557V558M801.5 555.5H807.5V557.5H801.5ZM810.5 559V561M807.5 554.5H813.5V559.5H807.5ZM817.5 552V554M817.5 557V559M814.5 554.5H820.5V557.5H814.5ZM850.5 560V561M847.5 561.5H853.5V571.5H847.5ZM857.5 564V571M857.5 584V585M854.5 571.5H860.5V584.5H854.5ZM863.5 572V581M863.5 591V593M860.5 581.5H866.5V591.5H860.5ZM870.5 579V580M870.5 584V585M867.5 580.5H873.5V584.5H867.5ZM877.5 574V576M874.5 576.5H880.5V583.5H874.5ZM883.5 574V576M883.5 580V587M880.5 576.5H886.5V580.5H880.5ZM940.5 560.5H946.5V584.5H940.5ZM949.5 588V589M949.5 623V624M946.5 589.5H952.5V623.5H946.5ZM956.5 594V595M956.5 610V616M953.5 595.5H959.5V610.5H953.5ZM963.5 584V590M963.5 598V599M960.5 590.5H966.5V598.5H960.5ZM969.5 580V589M969.5 593V595M966.5 589.5H972.5V593.5H966.5ZM976.5 588V591M976.5 595V600M973.5 591.5H979.5V595.5H973.5ZM983.5 588V590M983.5 593V598M980.5 590.5H986.5V593.5H980.5ZM989.5 576V586M989.5 588V590M986.5 586.5H992.5V588.5H986.5ZM996.5 579V584M996.5 588V590M993.5 584.5H999.5V588.5H993.5ZM1002.5 592V593M999.5 584.5H1005.5V592.5H999.5ZM1009.5 591V595M1009.5 608V609M1006.5 595.5H1012.5V608.5H1006.5ZM1016.5 602V605M1016.5 608V612M1013.5 605.5H1019.5V608.5H1013.5ZM1022.5 589V590M1022.5 599V600M1019.5 590.5H1025.5V599.5H1019.5ZM1029.5 587V592M1029.5 600V603M1026.5 592.5H1032.5V600.5H1026.5Z" stroke="#00ffff" fill="#000"/>
<path d="M49 403.8l3.2 3.2l-3.2 3.2l-3.2-3.2z" fill="#ffff00"/>
<path d="M102 502.1l3.2 3.2l-3.2 3.2l-3.2-3.2z" fill="#ffff00"/>
<path d="M168 453.9l3.2 3.2l-3.2 3.2l-3.2-3.2z" fill="#ffff00"/>
<path d="M268 535.9l3.2 3.2l-3.2 3.2l-3.2-3.2z" fill="#ffff00"/>
<path d="M407 511.1l3.2 3.2l-3.2 3.2l-3.2-3.2z" fill="#ffff00"/>
<path d="M552 574.2l3.2 3.2l-3.2 3.2l-3.2-3.2z" fill="#ffff00"/>
<path d="M665 501.8l3.2 3.2l-3.2 3.2l-3.2-3.2z" fill="#ffff00"/>
<path d="M757 564.9l3.2 3.2l-3.2 3.2l-3.2-3.2z" fill="#ffff00"/>
<path d="M830 543.9l3.2 3.2l-3.2 3.2l-3.2-3.2z" fill="#ffff00"/>
<path d="M863 588.6l3.2 3.2l-3.2 3.2l-3.2-3.2z" fill="#ffff00"/>
<path d="M890 536.5l3.2 3.2l-3.2 3.2l-3.2-3.2z" fill="#ffff00"/>
<path d="M949 618.8l3.2 3.2l-3.2 3.2l-3.2-3.2z" fill="#ffff00"/>
<path d="M989 575.1l3.2 3.2l-3.2 3.2l-3.2-3.2z" fill="#ffff00"/>
<path d="M1016 607.3l3.2 3.2l-3.2 3.2l-3.2-3.2z" fill="#ffff00"/>
<path d="M1035 583.5l3.2 3.2l-3.2 3.2l-3.2-3.2z" fill="#ffff00"/>
<polygon points="1.5,456.9 47.5,406.3 51.5,406.3 5.5,456.9" fill="#ff8080"/>
<circle cx="49.5" cy="406.3" r="2" fill="#ff8080"/>
<polygon points="102.5,503.4 168.5,454.4 168.5,458.4 102.5,507.4" fill="#ff8080"/>
<circle cx="102.5" cy="505.4" r="2" fill="#ff8080"/>
<circle cx="168.5" cy="456.4" r="2" fill="#ff8080"/>
<polygon points="268.5,537.2 407.5,510.3 407.5,514.3 268.5,541.2" fill="#ff8080"/>
<circle cx="268.5" cy="539.2" r="2" fill="#ff8080"/>
<circle cx="407.5" cy="512.3" r="2" fill="#ff8080"/>
<polygon points="552.5,577.1 665.5,501 665.5,505 552.5,581.1" fill="#ff8080"/>
<circle cx="552.5" cy="579.1" r="2" fill="#ff8080"/>
<circle cx="665.5" cy="503" r="2" fill="#ff8080"/>
<polygon points="757.5,566.2 830.5,543.1 830.5,547.1 757.5,570.2" fill="#ff8080"/>
<circle cx="757.5" cy="568.2" r="2" fill="#ff8080"/>
<circle cx="830.5" cy="545.1" r="2" fill="#ff8080"/>
<polygon points="861.5,592 888.5,539 892.5,539 865.5,592" fill="#ff8080"/>
<circle cx="863.5" cy="592" r="2" fill="#ff8080"/>
<circle cx="890.5" cy="539" r="2" fill="#ff8080"/>
<polygon points="947.5,622.2 987.5,577.7 991.5,577.7 951.5,622.2" fill="#ff8080"/>
<circle cx="949.5" cy="622.2" r="2" fill="#ff8080"/>
<circle cx="989.5" cy="577.7" r="2" fill="#ff8080"/>
<polygon points="1014.5,610.6 1033.5,586.1 1037.5,586.1 1018.5,610.6" fill="#ff8080"/>
<circle cx="1016.5" cy="610.6" r="2" fill="#ff8080"/>
<circle cx="1035.5" cy="586.1" r="2" fill="#ff8080"/>
<polygon points="46.7,406.9 99.7,504.9 105.3,504.9 52.3,406.9" fill="#0c8686"/>
<circle cx="49.5" cy="406.9" r="2.8" fill="#0c8686"/>
<circle cx="102.5" cy="504.9" r="2.8" fill="#0c8686"/>
<polygon points="168.5,454.2 268.5,535.9 268.5,541.5 168.5,459.8" fill="#0c8686"/>
<circle cx="168.5" cy="457" r="2.8" fill="#0c8686"/>
<circle cx="268.5" cy="538.7" r="2.8" fill="#0c8686"/>
<polygon points="407.5,510 552.5,576.1 552.5,581.7 407.5,515.6" fill="#0c8686"/>
<circle cx="407.5" cy="512.8" r="2.8" fill="#0c8686"/>
<circle cx="552.5" cy="578.9" r="2.8" fill="#0c8686"/>
<polygon points="665.5,501.5 757.5,564.9 757.5,570.5 665.5,507.1" fill="#0c8686"/>
<circle cx="665.5" cy="504.3" r="2.8" fill="#0c8686"/>
<circle cx="757.5" cy="567.7" r="2.8" fill="#0c8686"/>
<polygon points="827.7,545.7 860.7,591.4 866.3,591.4 833.3,545.7" fill="#0c8686"/>
<circle cx="830.5" cy="545.7" r="2.8" fill="#0c8686"/>
<circle cx="863.5" cy="591.4" r="2.8" fill="#0c8686"/>
<polygon points="887.7,539.6 946.7,621.6 952.3,621.6 893.3,539.6" fill="#0c8686"/>
<circle cx="890.5" cy="539.6" r="2.8" fill="#0c8686"/>
<circle cx="949.5" cy="621.6" r="2.8" fill="#0c8686"/>
<polygon points="986.7,578.2 1013.7,610.1 1019.3,610.1 992.3,578.2" fill="#0c8686"/>
<circle cx="989.5" cy="578.2" r="2.8" fill="#0c8686"/>
<circle cx="1016.5" cy="610.1" r="2.8" fill="#0c8686"/>
<path d="M48.5 407h2v6h4l-5 6l-5-6h4z" fill="#00dc00"/>
<path d="M128.5 458.6l3.2 3.2l-3.2 3.2l-3.2-3.2z" fill="#ffff00"/>
<path d="M127.5 463.3h2v6h4l-5 6l-5-6h4z" fill="#00dc00"/>
<path d="M167.5 456.6h2v6h4l-5 6l-5-6h4z" fill="#00dc00"/>
<path d="M314.5 508.7l3.2 3.2l-3.2 3.2l-3.2-3.2z" fill="#ffff00"/>
<path d="M313.5 513.6h2v6h4l-5 6l-5-6h4z" fill="#00dc00"/>
<path d="M406.5 512.9h2v6h4l-5 6l-5-6h4z" fill="#00dc00"/>
<path d="M664.5 504.5h2v6h4l-5 6l-5-6h4z" fill="#00dc00"/>
<path d="M829.5 546.1h2v6h4l-5 6l-5-6h4z" fill="#00dc00"/>
<path d="M889.5 539.8h2v6h4l-5 6l-5-6h4z" fill="#00dc00"/>
<path d="M988.5 578.7h2v6h4l-5 6l-5-6h4z" fill="#00dc00"/>
<path d="M1035.5 581.8l3.2 3.2l-3.2 3.2l-3.2-3.2z" fill="#ffff00"/>
<path d="M1034.5 586.9h2v6h4l-5 6l-5-6h4z" fill="#00dc00"/>
<path d="M294.5 536.9l5 6h-4v5.5h-2v-5.5h-4z" fill="#ff0000"/>
<path d="M433.5 551.4l3.2 3.2l-3.2 3.2l-3.2-3.2z" fill="#ffff00"/>
<path d="M466.5 551.4l3.2 3.2l-3.2 3.2l-3.2-3.2z" fill="#ffff00"/>
<path d="M499.5 561.3l5 6h-4v5.5h-2v-5.5h-4z" fill="#ff0000"/>
<path d="M565.5 574.5l5 6h-4v5.5h-2v-5.5h-4z" fill="#ff0000"/>
<path d="M824.5 559.9l5 6h-4v5.5h-2v-5.5h-4z" fill="#ff0000"/>
<path d="M890.5 577.6l5 6h-4v5.5h-2v-5.5h-4z" fill="#ff0000"/>
<polyline points="3.2,480.9 13,482.3 25.9,485.3 38.8,486.8 51.7,487.9 64.7,488.5 80,488.9 98,487.8 115,487.1 130,485.7 146,483.5 170,483 201.6,482.9 230,483 245,483.9 262,485.1 291.6,488 320,490.1 352,492.3 369.3,493.1 381.6,494.8 393.9,497.3 410,499 424.8,501.6 447,507.5 471.6,513.3 491.3,516.7 505,518.3 524.6,522.4 549.3,528.5 573.9,532.8 595,536.5 614.6,538.9 639.3,542.2 664,543.8 685,545.1 704.6,545.2 729.3,545.8 741,547.2 755.8,548.2 774.2,549.5 786.5,550.6 798.8,551.2 819.3,551.9 844,554.6 862.7,555.1 876.5,556.8 887.6,557.4 904.3,557.4 929,557.4 940,557.5 962.3,559 984.6,560.9 1007,562.8 1029.2,564.5 1048.2,566.1" stroke="#00ff00" stroke-width="1" fill="none"/>
<polyline points="3.2,489.9 13,488.2 25.9,485.3 38.8,480.9 51.7,475.8 64.7,470.7 70,468.8 83,464.4 102,461.3 124,462.7 140,465.1 150,466.5 164.6,470.9 179.4,475.1 201.6,483.5 221.3,489.3 230,490.5 244.8,495.4 262,501.3 279.3,507.2 294,512.2 304,514.9 320,519.7 334.8,521.5 357,524.8 381.6,525.6 410,523.7 422.3,525 447,528.4 471.6,531.7 491.3,535.1 500,537.3 512.3,538.6 524.6,541.9 537,547 549.3,552 561.6,554.5 573.9,555.8 586.2,557 600,558.2 614.6,560.1 639.3,562.3 654,562.3 664,560.1 676.2,556.8 685,554.3 704.6,551 721.9,548.5 741.6,547.4 766.2,547.7 784.8,547.9 799.6,549.9 819.3,551.2 844,554.6 847.5,555.6 855.8,558.4 862.7,560.7 869.6,562.1 876.5,562.8 887.6,563.1 904.3,562.9 929,562.4 941.2,562.9 945.6,565 953.4,568.8 966.8,573.3 980,576 995.8,576.7 1007,577.9 1018,580.1 1029.2,582.5 1038,584.7 1048.2,588.2" stroke="#ff00ff" stroke-width="1" fill="none"/>
<polyline points="3.2,486.8 8.6,482.3 17.2,477.9 25.9,472.2 34.5,464.7 43,456.8 51.7,453.8 64.7,452.8 80,452.3 91.5,453.2 100,459.9 113,468.1 124,473.9 134.6,476.9 150,481 159,481.7 168,479.8 174,481.7 183,484.3 192,484.6 200.8,487.6 218.5,493.6 227,498.4 230,500.8 239.9,505.4 254.6,512.2 267,517.2 279.3,520.6 291.6,524.2 304,525.2 316,523.1 330,524.1 357,525.4 381.6,525.1 400,524.4 417,522.7 427,524.8 434.6,526.7 447,530.9 460,536.6 475,542.1 493.7,545.9 500,546.5 514.8,547 524.6,548.7 537,553.6 549.3,558.6 561.6,562.8 573.9,565.3 586.2,566.5 598,565.8 602.3,564.3 614.6,561.8 627,560.1 639.3,559.3 651.6,558.4 664,554.3 676.2,550.9 685,549.5 694.8,546 709.6,541.9 729.3,540.7 741.6,543.4 754,546.8 766.2,551 780,554.7 782.3,555.4 794.6,558.2 807,559.2 819.3,558.2 831.6,554.6 844,554.6 847.5,555.1 855.8,559.7 862.7,562.6 869.6,564.9 876.5,566.8 883.5,568.1 890.4,568.7 899.3,570.8 911.7,570.2 921.5,567.4 931.4,563.2 941.2,562.4 945.6,562.8 953.4,568.8 962.3,573.3 971.2,577.1 980,580.9 986.8,583.9 995.8,586.9 1007,591.5 1016,593 1029.2,593 1038,592.3 1048,593.7" stroke="#ffff00" stroke-width="1" fill="none"/>
<polyline points="19.4,467 23.7,466.3 30,464 34.5,457.5 39.9,450.9 45.3,446.5 51.7,440.7 58,441.6 65,448.4 72,455.2 78.6,459.3 91.5,466.5 102,473.1 113,475.3 124,479 134.6,481.7 145,483 159.7,481 167,480.1 177,482.6 189,485.9 201.6,495.2 214,501.8 226,509.4 240,512.8 254.6,515.6 264.5,520.6 272,526.5 279.3,527.5 291.6,528.5 301.4,525.6 311.3,523.1 330,523.7 345,525.8 360,525.8 380,524.8 395,523.7 410,521.7 420,523.1 431,529.5 447,541.7 456.8,547.5 471.6,547.2 484,545.1 500,545.8 512.3,547.8 524.6,551.2 532,557.8 539.4,563.7 546.8,568.7 556.7,571.3 564,569.5 571.4,566.2 581.3,563.7 600,562 614.6,559.3 639.3,560.1 651.6,558.4 661.4,554.3 668.8,546.8 676.2,542.5 683.6,539.6 690,539 697,541.9 704.6,542.7 729.3,540.2 739,546 749,551.8 758.8,557.7 766.2,561.1 780,558.6 782.3,557 799.6,555.4 819.3,555.9 829,554.6 839,552.9 847.5,555.6 853,560.3 858.5,565.4 864,570.1 869.6,575.3 876,579.4 882,580.4 886.2,578.6 891.8,574.8 896,570.1 901.5,566.8 909.2,562.4 919,559 933.8,556.5 940,559 945.6,567.2 951,574.9 957.8,583.9 962.3,589.2 969,592.3 975.7,593.7 984.6,590.7 993.5,588.2 1000,588.5 1007,591.5 1016,593.7 1022.5,594.5 1029.2,596.8 1036,597.6 1042.6,595.7 1048.2,593.7" stroke="#ffff00" stroke-width="1" fill="none"/>
</g>
<path d="M0 19.5H1124M0.5 0V20M23.5 0V20M0 385.5H1130M1072.5 20V650M1123.5 0V650M0 630.5H1072M0 646.5H1072M0.5 630V650M807.5 0V19M842.5 0V19M876.5 0V19M911.5 0V19M946.5 0V19M981.5 0V19M1016.5 0V19M1051.5 0V19M1086.5 0V19M81.5 631V646M228.5 631V646M339.5 631V646M472.5 631V646M624.5 631V646M756.5 631V646M850.5 631V646M118.5 631V634M154.5 631V634M191.5 631V634M256.5 631V634M284.5 631V634M311.5 631V634M365.5 631V634M406.5 631V634M439.5 631V634M510.5 631V634M548.5 631V634M586.5 631V634M657.5 631V634M690.5 631V634M723.5 631V634M779.5 631V634M826.5 631V634M886.5 631V634M921.5 631V634M959.5 631V634M43.5 647V650M73.5 647V650M115.5 647V650M144.5 647V650M177.5 647V650M208.5 647V650M241.5 647V650M282.5 647V650M308.5 647V650M338.5 647V650M365.5 647V650M390.5 647V650M422.5 647V650M452.5 647V650M480.5 647V650M508.5 647V650M538.5 647V650M569.5 647V650M598.5 647V650M629.5 647V650M663.5 647V650M693.5 647V650M723.5 647V650M757.5 647V650M790.5 647V650M820.5 647V650M850.5 647V650M880.5 647V650M910.5 647V650M940.5 647V650M1073 40.5H1078M1073 58.5H1076M1073 76.5H1078M1073 94.5H1076M1073 112.5H1078M1073 130.5H1076M1073 148.5H1078M1073 166.5H1076M1073 184.5H1078M1073 202.5H1076M1073 220.5H1078M1073 237.5H1076M1073 255.5H1078M1073 273.5H1076M1073 291.5H1078M1073 309.5H1076M1073 327.5H1078M1073 345.5H1076M1073 363.5H1078M1073 404.5H1078M1073 429.5H1076M1073 453.5H1078M1073 477.5H1076M1073 502.5H1078M1073 526.5H1076M1073 550.5H1078M1073 575.5H1076M1073 599.5H1078M1124 25.5H1130M1124 45.5H1130M1124 238.5H1130M1124 337.5H1130M1124 396.5H1130M1124 415.5H1130M1124 438.5H1130" stroke="#c00000" fill="none"/>
<path d="M50.5 44.5L55 45.5L61 46.5M952 363.5H961" stroke="#c0c0c0" fill="none"/>
<rect x="1125.5" y="399.5" width="6" height="14" fill="none" stroke="#e0e000"/>
<path d="M8 649.5h1M11 649.5h2M15 649.5h1M17 649.5h1M21 649.5h1M51 649.5h1" stroke="#e0e0e0" fill="none"/>
<rect x="5.5" y="3.5" width="12" height="10" rx="2" fill="none" stroke="#808080" shape-rendering="auto"/><rect x="12" y="5" width="3" height="7" fill="#a0a0a0"/>
<rect x="1057.5" y="23.5" width="12" height="10" rx="2" fill="none" stroke="#a0a0a0" shape-rendering="auto"/><rect x="1064" y="25" width="3" height="7" fill="#c0c0c0"/>
<path d="M1044 23.5l5 5.5l-5 5.5l-5-5.5z" fill="none" stroke="#a0a0a0" shape-rendering="auto"/>
<circle cx="95" cy="29" r="6" fill="#808080" shape-rendering="auto"/><path d="M92 28l3 2.7l3-2.7" stroke="#101010" fill="none" shape-rendering="auto" stroke-width="1.3"/>
<circle cx="8" cy="394" r="6" fill="#808080" shape-rendering="auto"/><path d="M5 393l3 2.7l3-2.7" stroke="#101010" fill="none" shape-rendering="auto" stroke-width="1.3"/>
<path d="M451.5 4.5L456 9L451.5 13.5" stroke="#c0c0c0" fill="none" shape-rendering="auto"/>
<path d="M42 373l3 2.6h-6z" fill="#ff0000" shape-rendering="auto"/>
</svg>
<span class="t " style="left:28.5px;top:2px">分时</span>
<span class="t " style="left:61px;top:2px">1分钟</span>
<span class="t " style="left:100px;top:2px">5分钟</span>
<span class="t " style="left:139px;top:2px">15分钟</span>
<span class="t " style="left:185.5px;top:2px">30分钟</span>
<span class="t " style="left:231px;top:2px">60分钟</span>
<span class="t c" style="left:278.5px;top:2px">日线</span>
<span class="t " style="left:312px;top:2px">周线</span>
<span class="t " style="left:345px;top:2px">月线</span>
<span class="t " style="left:378.5px;top:2px">多周期</span>
<span class="t " style="left:422.5px;top:2px">更多</span>
<span class="btn" style="left:807px">复权</span>
<span class="btn" style="left:842px">叠加</span>
<span class="btn" style="left:876px">多股</span>
<span class="btn" style="left:911px">统计</span>
<span class="btn" style="left:946px">画线</span>
<span class="btn" style="left:981px">F10</span>
<span class="btn" style="left:1016px">标记</span>
<span class="btn" style="left:1051px">+自选</span>
<span class="btn" style="left:1087px">返回</span>
<span class="t" style="left:2.5px;top:22px">东风科技(日线)</span>
<span class="t w" style="left:105px;top:22px">MA5: 11.12</span>
<span class="t y" style="left:170px;top:22px">MA10: 11.12</span>
<span class="t m" style="left:242px;top:22px">MA20: 11.23</span>
<span class="t g" style="left:314px;top:22px">MA60: 11.68</span>
<span class="t y" style="left:386px;top:22px">局部极点: -</span>
<span class="t" style="left:18px;top:387px">股朋指标网</span>
<span class="t w" style="left:83.5px;top:387px">MA1: 11.12</span>
<span class="t y" style="left:148.5px;top:387px">MA2: 11.12</span>
<span class="t m" style="left:213.5px;top:387px">MA3: 11.23</span>
<span class="t g" style="left:278.5px;top:387px">MA4: 11.68</span>
<span class="t y" style="left:343px;top:387px">局部极点: - : 11.12</span>
<span class="t" style="left:64px;top:41px">14.97</span>
<span class="t" style="left:962px;top:358px">10.50</span>
<span class="ax" style="top:34.5px">15.00</span>
<span class="ax" style="top:70.5px">14.50</span>
<span class="ax" style="top:106.5px">14.00</span>
<span class="ax" style="top:142.5px">13.50</span>
<span class="ax" style="top:178.5px">13.00</span>
<span class="ax" style="top:214.5px">12.50</span>
<span class="ax" style="top:249.5px">12.00</span>
<span class="ax" style="top:285.5px">11.50</span>
<span class="ax" style="top:321.5px">11.00</span>
<span class="ax" style="top:357.5px">10.50</span>
<span class="ax" style="top:398.5px">15.00</span>
<span class="ax" style="top:423.5px">14.50</span>
<span class="ax" style="top:447.5px">14.00</span>
<span class="ax" style="top:471.5px">13.50</span>
<span class="ax" style="top:496.5px">13.00</span>
<span class="ax" style="top:520.5px">12.50</span>
<span class="ax" style="top:544.5px">12.00</span>
<span class="ax" style="top:569.5px">11.50</span>
<span class="ax" style="top:593.5px">11.00</span>
<div class="t" style="left:1074px;top:508px;width:49px;height:15px;background:#000080;color:#e0e0e0;line-height:15px">12.57</div>
<span class="t" style="left:38.5px;top:375px;color:#ff0000;font-weight:bold;font-size:10px;line-height:12px">S</span>
<span class="t" style="left:313px;top:371px;width:13px;height:13px;background:#004080;color:#fff;line-height:13px;text-align:center">财</span>
<span class="t" style="left:678px;top:371px;width:13px;height:13px;background:#d05a10;color:#fff;line-height:13px;text-align:center">预</span>
<span class="t" style="left:1px;top:614px;color:#808080">用到未来数据</span>
<span class="t r" style="left:3px;top:632px">2025年</span>
<span class="t r" style="left:83px;top:632px">9</span>
<span class="t r" style="left:230px;top:632px">10</span>
<span class="t r" style="left:341px;top:632px">11</span>
<span class="t r" style="left:474px;top:632px">12</span>
<span class="t r" style="left:626px;top:632px">1</span>
<span class="t r" style="left:758px;top:632px">2</span>
<span class="t r" style="left:852px;top:632px">3</span>
<div style="position:absolute;left:1126px;top:0;width:4px;height:650px;overflow:hidden;color:#d0d0d0;font-size:12px">
<span class="t" style="left:0;top:28px;line-height:14px;">东</span>
<span class="t" style="left:0;top:49px;line-height:14px;">卖</span>
<span class="t" style="left:0;top:64.6px;line-height:14px;">五</span>
<span class="t" style="left:0;top:80.2px;line-height:14px;">卖</span>
<span class="t" style="left:0;top:95.8px;line-height:14px;">四</span>
<span class="t" style="left:0;top:111.4px;line-height:14px;">卖</span>
<span class="t" style="left:0;top:127px;line-height:14px;">三</span>
<span class="t" style="left:0;top:142.6px;line-height:14px;">卖</span>
<span class="t" style="left:0;top:158.2px;line-height:14px;">二</span>
<span class="t" style="left:0;top:173.8px;line-height:14px;">卖</span>
<span class="t" style="left:0;top:189.4px;line-height:14px;">一</span>
<span class="t" style="left:0;top:205px;line-height:14px;">买</span>
<span class="t" style="left:0;top:220.6px;line-height:14px;">一</span>
<span class="t" style="left:0;top:243px;line-height:14px;">现</span>
<span class="t" style="left:0;top:258.6px;line-height:14px;">价</span>
<span class="t" style="left:0;top:274.2px;line-height:14px;">今</span>
<span class="t" style="left:0;top:289.8px;line-height:14px;">开</span>
<span class="t" style="left:0;top:305.4px;line-height:14px;">最</span>
<span class="t" style="left:0;top:321px;line-height:14px;">高</span>
<span class="t" style="left:0;top:341px;line-height:14px;">总</span>
<span class="t" style="left:0;top:356.6px;line-height:14px;">量</span>
<span class="t" style="left:0;top:372.2px;line-height:14px;">外</span>
<span class="t" style="left:0;top:399.5px;line-height:14px;color:#e0e000">日</span>
<span class="t" style="left:0;top:420px;line-height:14px;">分</span>
<span class="t" style="left:0;top:444px;line-height:14px;font-weight:bold;font-size:14px;color:#fff;left:-1px">1</span>
<span class="t" style="left:0;top:460.6px;line-height:14px;font-weight:bold;font-size:14px;color:#fff;left:-1px">1</span>
<span class="t" style="left:0;top:477.2px;line-height:14px;font-weight:bold;font-size:14px;color:#fff;left:-1px">1</span>
<span class="t" style="left:0;top:493.8px;line-height:14px;font-weight:bold;font-size:14px;color:#fff;left:-1px">1</span>
<span class="t" style="left:0;top:510.4px;line-height:14px;font-weight:bold;font-size:14px;color:#fff;left:-1px">1</span>
<span class="t" style="left:0;top:527px;line-height:14px;font-weight:bold;font-size:14px;color:#fff;left:-1px">1</span>
<span class="t" style="left:0;top:543.6px;line-height:14px;font-weight:bold;font-size:14px;color:#fff;left:-1px">1</span>
<span class="t" style="left:0;top:560.2px;line-height:14px;font-weight:bold;font-size:14px;color:#fff;left:-1px">1</span>
<span class="t" style="left:0;top:576.8px;line-height:14px;font-weight:bold;font-size:14px;color:#fff;left:-1px">1</span>
<span class="t" style="left:0;top:593.4px;line-height:14px;font-weight:bold;font-size:14px;color:#fff;left:-1px">1</span>
</div>
<div style="position:absolute;left:971px;top:600px;width:159px;height:50px;background:#3a3434"></div>
<div style="position:absolute;left:971px;top:600px;width:5px;height:50px;background:#423c3c"></div>
<span class="t" style="left:971px;width:159px;text-align:center;top:603px;font-size:18px;line-height:26px;font-weight:bold;color:#fff;font-family:'Liberation Sans','Noto Sans CJK SC',sans-serif">指标公式网</span>
<span class="t" style="left:971px;width:165px;text-align:center;top:627.5px;font-size:16.4px;line-height:20px;color:#fff;font-family:'Liberation Sans',sans-serif">www.zbgs3.com</span>
</body></html>
